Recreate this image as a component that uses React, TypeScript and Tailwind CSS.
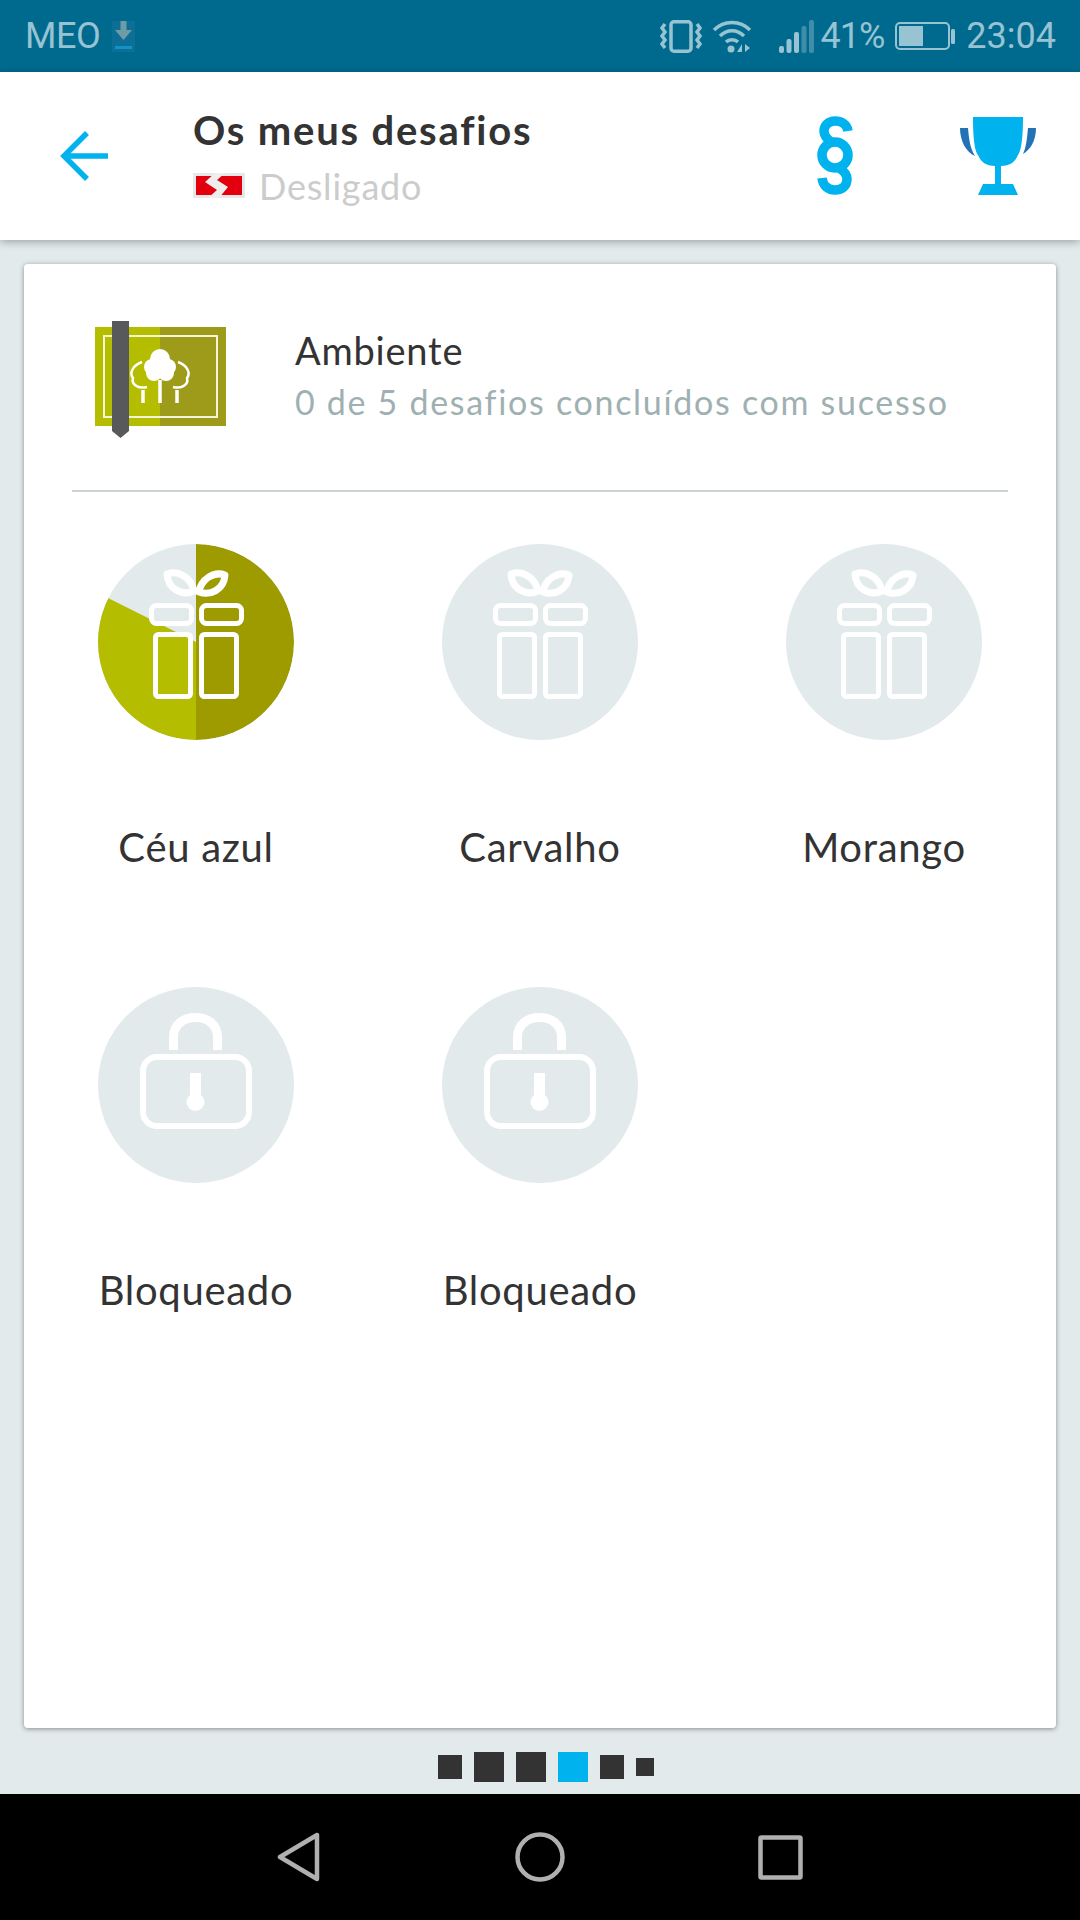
const GIFT_STROKE = 'stroke-white';

function GiftIcon() {
  return (
    <svg viewBox="0 0 196 196" className="absolute inset-0 w-full h-full fill-none">
      <g className={GIFT_STROKE} strokeWidth="5">
        <rect x="53.500" y="61.500" width="40" height="18" rx="5" />
        <rect x="103.500" y="61.500" width="40" height="18" rx="5" />
        <rect x="57.500" y="90.500" width="35" height="62" rx="3" />
        <rect x="103.500" y="90.500" width="35" height="62" rx="3" />
        <path d="M69 30 C80 26 93 33 96 47 C85 52 70 46 69 30 Z" strokeWidth="7" strokeLinejoin="round" />
        <path d="M127 31 C116 27 103 35 101 48 C112 52 126 46 127 31 Z" strokeWidth="7" strokeLinejoin="round" />
      </g>
    </svg>
  );
}

function LockIcon() {
  return (
    <svg viewBox="0 0 196 196" className="absolute inset-0 w-full h-full fill-none">
      <path d="M75.500 63 V50 C75.500 38 85 30.500 97.500 30.500 C110 30.500 119.500 38 119.500 50 V63" className="stroke-white" strokeWidth="9" />
      <rect x="45" y="70" width="106" height="69" rx="14" className="stroke-white" strokeWidth="6" />
      <rect x="92" y="86" width="11" height="24" className="fill-white" />
      <circle cx="97.500" cy="115" r="9" className="fill-white" />
    </svg>
  );
}

function Challenge({ label, icon, progress }: { label: string; icon: 'gift' | 'lock'; progress?: boolean }) {
  return (
    <div className="h-[443px] flex flex-col items-center">
      <div className="relative w-[196px] h-[196px] rounded-full bg-[#e2eaec] overflow-hidden">
        {progress && (
          <svg viewBox="0 0 196 196" className="absolute inset-0 w-full h-full">
            <path d="M98 98 L98 0 A98 98 0 0 1 98 196 Z" fill="#9e9b00" />
            <path d="M98 98 L98 196 A98 98 0 0 1 10 54 Z" fill="#b5bd00" />
          </svg>
        )}
        {icon === 'gift' ? <GiftIcon /> : <LockIcon />}
      </div>
      <div className="mt-[83px] text-[40px] leading-[48px] text-[#333333] font-['Lato',sans-serif] tracking-[0.7px]">{label}</div>
    </div>
  );
}

const DOTS = [
  { w: 'w-[24px] h-[24px]', c: 'bg-[#333333]' },
  { w: 'w-[30px] h-[30px]', c: 'bg-[#333333]' },
  { w: 'w-[30px] h-[30px]', c: 'bg-[#333333]' },
  { w: 'w-[30px] h-[30px]', c: 'bg-[#00b2ee]' },
  { w: 'w-[24px] h-[24px]', c: 'bg-[#333333]' },
  { w: 'w-[18px] h-[18px]', c: 'bg-[#333333]' },
];

export default function App() {
  return (
    <div className="w-[1080px] h-[1920px] flex flex-col bg-[#e2eaec] overflow-hidden font-['Lato',sans-serif]">
      {/* status bar */}
      <div className="h-[72px] shrink-0 bg-[#006a8e] flex items-center text-[#97c3d3] font-['Roboto',sans-serif] text-[36px] leading-none">
        <span className="ml-[25px] tracking-[-0.5px]">MEO</span>
        <svg viewBox="0 0 23 31" className="ml-[12px] w-[23px] h-[31px]">
          <rect width="23" height="31" fill="#0d6f96" />
          <path d="M8.500 0 H14.500 V9 H20 L11.500 19 L3 9 H8.500 Z" fill="#6f9aa8" />
          <rect x="3" y="25" width="17" height="3" fill="#0f94c8" />
        </svg>
        <div className="ml-auto flex items-center">
          <svg viewBox="0 0 42 33" className="w-[42px] h-[33px] fill-none stroke-[#97c3d3]" strokeWidth="3.500">
            <rect x="11" y="1.750" width="20" height="29.500" rx="3" />
            <path d="M5 4 L2 8 L5 12 L2 16 L5 20 L2 24 L5 28" />
            <path d="M37 4 L40 8 L37 12 L40 16 L37 20 L40 24 L37 28" />
          </svg>
          <svg viewBox="0 0 40 33" className="ml-[10px] w-[40px] h-[33px] fill-none stroke-[#97c3d3]" strokeWidth="3.500">
            <path d="M2 10 C12 0 28 0 38 10" />
            <path d="M8 16 C15 9 25 9 32 16" />
            <path d="M14 22 C17 19 23 19 26 22" />
            <circle cx="19" cy="29" r="3.500" fill="#97c3d3" stroke="none" />
            <path d="M30 32 L30 24 L25 32 Z M33 24 L33 32 L38 28 Z" fill="#97c3d3" stroke="none" />
          </svg>
          <svg viewBox="0 0 35 33" className="ml-[27px] w-[35px] h-[33px]">
            <rect x="0" y="26" width="5" height="7" rx="2" fill="#97c3d3" />
            <rect x="7.500" y="19" width="5" height="14" rx="2" fill="#97c3d3" />
            <rect x="15" y="12" width="5" height="21" rx="2" fill="#97c3d3" />
            <rect x="22.500" y="6" width="5" height="27" rx="2" fill="#3f8dab" />
            <rect x="30" y="0" width="5" height="33" rx="2" fill="#3f8dab" />
          </svg>
          <span className="ml-[7px] tracking-[-1px]">41%</span>
          <svg viewBox="0 0 61 28" className="ml-[11px] w-[61px] h-[28px] fill-none">
            <rect x="1" y="1" width="53" height="26" rx="4" stroke="#97c3d3" strokeWidth="2" />
            <rect x="4" y="4" width="24" height="20" fill="#97c3d3" />
            <rect x="56" y="7" width="4" height="15" rx="1.500" fill="#97c3d3" />
          </svg>
          <span className="ml-[10px] mr-[24px]">23:04</span>
        </div>
      </div>

      {/* app bar */}
      <div className="h-[168px] shrink-0 bg-white shadow-[0_2px_8px_rgba(0,0,0,0.3)] flex items-center relative z-10">
        <svg viewBox="0 0 48 50" className="ml-[60px] w-[48px] h-[50px] fill-none stroke-[#00b2ee]" strokeWidth="5.500">
          <path d="M48 25 H4" />
          <path d="M27 2 L4 25 L27 48" />
        </svg>
        <div className="ml-[85px] flex flex-col mt-[1px]">
          <div className="text-[40px] leading-[46px] font-bold text-[#333333] tracking-[1.800px]">Os meus desafios</div>
          <div className="flex items-center mt-[12px]">
            <svg viewBox="0 0 52 25" className="w-[52px] h-[25px]">
              <rect width="52" height="25" fill="#e8e8e8" />
              <rect x="3" y="3" width="46" height="19" fill="#e2000f" />
              <path d="M22 0 H32 L24 7 L35 14 L26 25 H15 L24 17 L12 9 Z" fill="#eeeeee" />
            </svg>
            <span className="ml-[14px] text-[36px] leading-[42px] text-[#cccccc] tracking-[0.8px]">Desligado</span>
          </div>
        </div>
        <svg viewBox="0 0 36 79" className="absolute left-[817px] top-[44px] w-[36px] h-[79px] fill-none stroke-[#00b2ee]" strokeWidth="9.500">
          <path d="M31 15 C30 8 24 5 18 5 C11 5 7 10 7 15 C7 20 10 23 14 26" />
          <circle cx="18" cy="39" r="13" />
          <path d="M22 52 C27 55 30 59 30 63 C30 70 25 74 18 74 C11 74 6 70 5 62" />
        </svg>
        <svg viewBox="0 0 76 78" className="absolute left-[960px] top-[45px] w-[76px] h-[78px]">
          <path d="M13 0 H63 C63 16 62 33 58 38 C55 45 50 49 41 49 V67 H53 L58 78 H18 L23 67 H35 V49 C26 49 21 45 18 38 C14 33 13 16 13 0 Z" fill="#00b2ee" />
          <path d="M0 11 H8 C9 22 10 31 15 39 C6 35 0 24 0 11 Z M76 11 H68 C67 22 66 31 63 37 C70 33 76 24 76 11 Z" fill="#2372b5" />
        </svg>
      </div>

      {/* challenge card */}
      <div className="mt-[24px] mx-[24px] h-[1464px] shrink-0 bg-white rounded-[4px] shadow-[0_1px_5px_rgba(0,0,0,0.4)] flex flex-col">
        <div className="mx-[48px] h-[228px] shrink-0 border-b-2 border-[#ccd3d4] flex items-start">
          <svg viewBox="0 0 131 117" className="ml-[23px] mt-[57px] w-[131px] h-[117px] shrink-0 fill-none">
            <rect x="0" y="6" width="65" height="99" fill="#b5bd00" />
            <rect x="65" y="6" width="66" height="99" fill="#9e9b1a" />
            <rect x="9" y="15" width="113" height="81" stroke="#f4f4d8" strokeWidth="2" />
            <rect x="17" y="0" width="17" height="110" fill="#58595b" />
            <path d="M17 110 L25.500 117 L34 110 Z" fill="#58595b" />
            <circle cx="65" cy="38" r="10" fill="white" />
            <circle cx="57" cy="46" r="8" fill="white" />
            <circle cx="73" cy="46" r="8" fill="white" />
            <circle cx="59" cy="52" r="8" fill="white" />
            <circle cx="71" cy="52" r="8" fill="white" />
            <path d="M65 59 V82 M48 69 V82 M82 69 V82" stroke="white" strokeWidth="3.500" />
            <path d="M47 41 C38 44 34 52 38 57 C36 64 44 68 52 66" stroke="white" strokeWidth="2.500" />
            <path d="M83 41 C92 44 96 52 92 57 C94 64 86 68 78 66" stroke="white" strokeWidth="2.500" />
          </svg>
          <div className="ml-[69px] mt-[64px]">
            <div className="text-[38px] leading-[44px] text-[#333333] tracking-[0.8px]">Ambiente</div>
            <div className="text-[34px] leading-[42px] mt-[9px] text-[#9fb0b2] tracking-[1.700px] whitespace-nowrap">0 de 5 desafios concluídos com sucesso</div>
          </div>
        </div>
        <div className="mt-[52px] grid grid-cols-3">
          <Challenge label="Céu azul" icon="gift" progress />
          <Challenge label="Carvalho" icon="gift" />
          <Challenge label="Morango" icon="gift" />
          <Challenge label="Bloqueado" icon="lock" />
          <Challenge label="Bloqueado" icon="lock" />
        </div>
      </div>

      {/* pager */}
      <div className="h-[66px] shrink-0 flex items-center justify-center gap-[12px] pl-[12px] pt-[12px]">
        {DOTS.map((d, i) => (
          <div key={i} className={`${d.w} ${d.c}`} />
        ))}
      </div>

      {/* navigation bar */}
      <div className="flex-1 bg-black flex items-center justify-center">
        <svg viewBox="0 0 44 50" className="w-[44px] h-[50px] fill-none stroke-[#b0b0b0]" strokeWidth="4.500" strokeLinejoin="round">
          <path d="M40 3 V47 L3 25 Z" />
        </svg>
        <svg viewBox="0 0 50 50" className="ml-[194px] w-[50px] h-[50px] fill-none stroke-[#b0b0b0]" strokeWidth="4.500">
          <circle cx="25" cy="25" r="22.500" />
        </svg>
        <svg viewBox="0 0 45 45" className="ml-[193px] w-[45px] h-[45px] fill-none stroke-[#b0b0b0]" strokeWidth="4.500" strokeLinejoin="round">
          <rect x="2.500" y="2.500" width="40" height="40" rx="1" />
        </svg>
      </div>
    </div>
  );
}
